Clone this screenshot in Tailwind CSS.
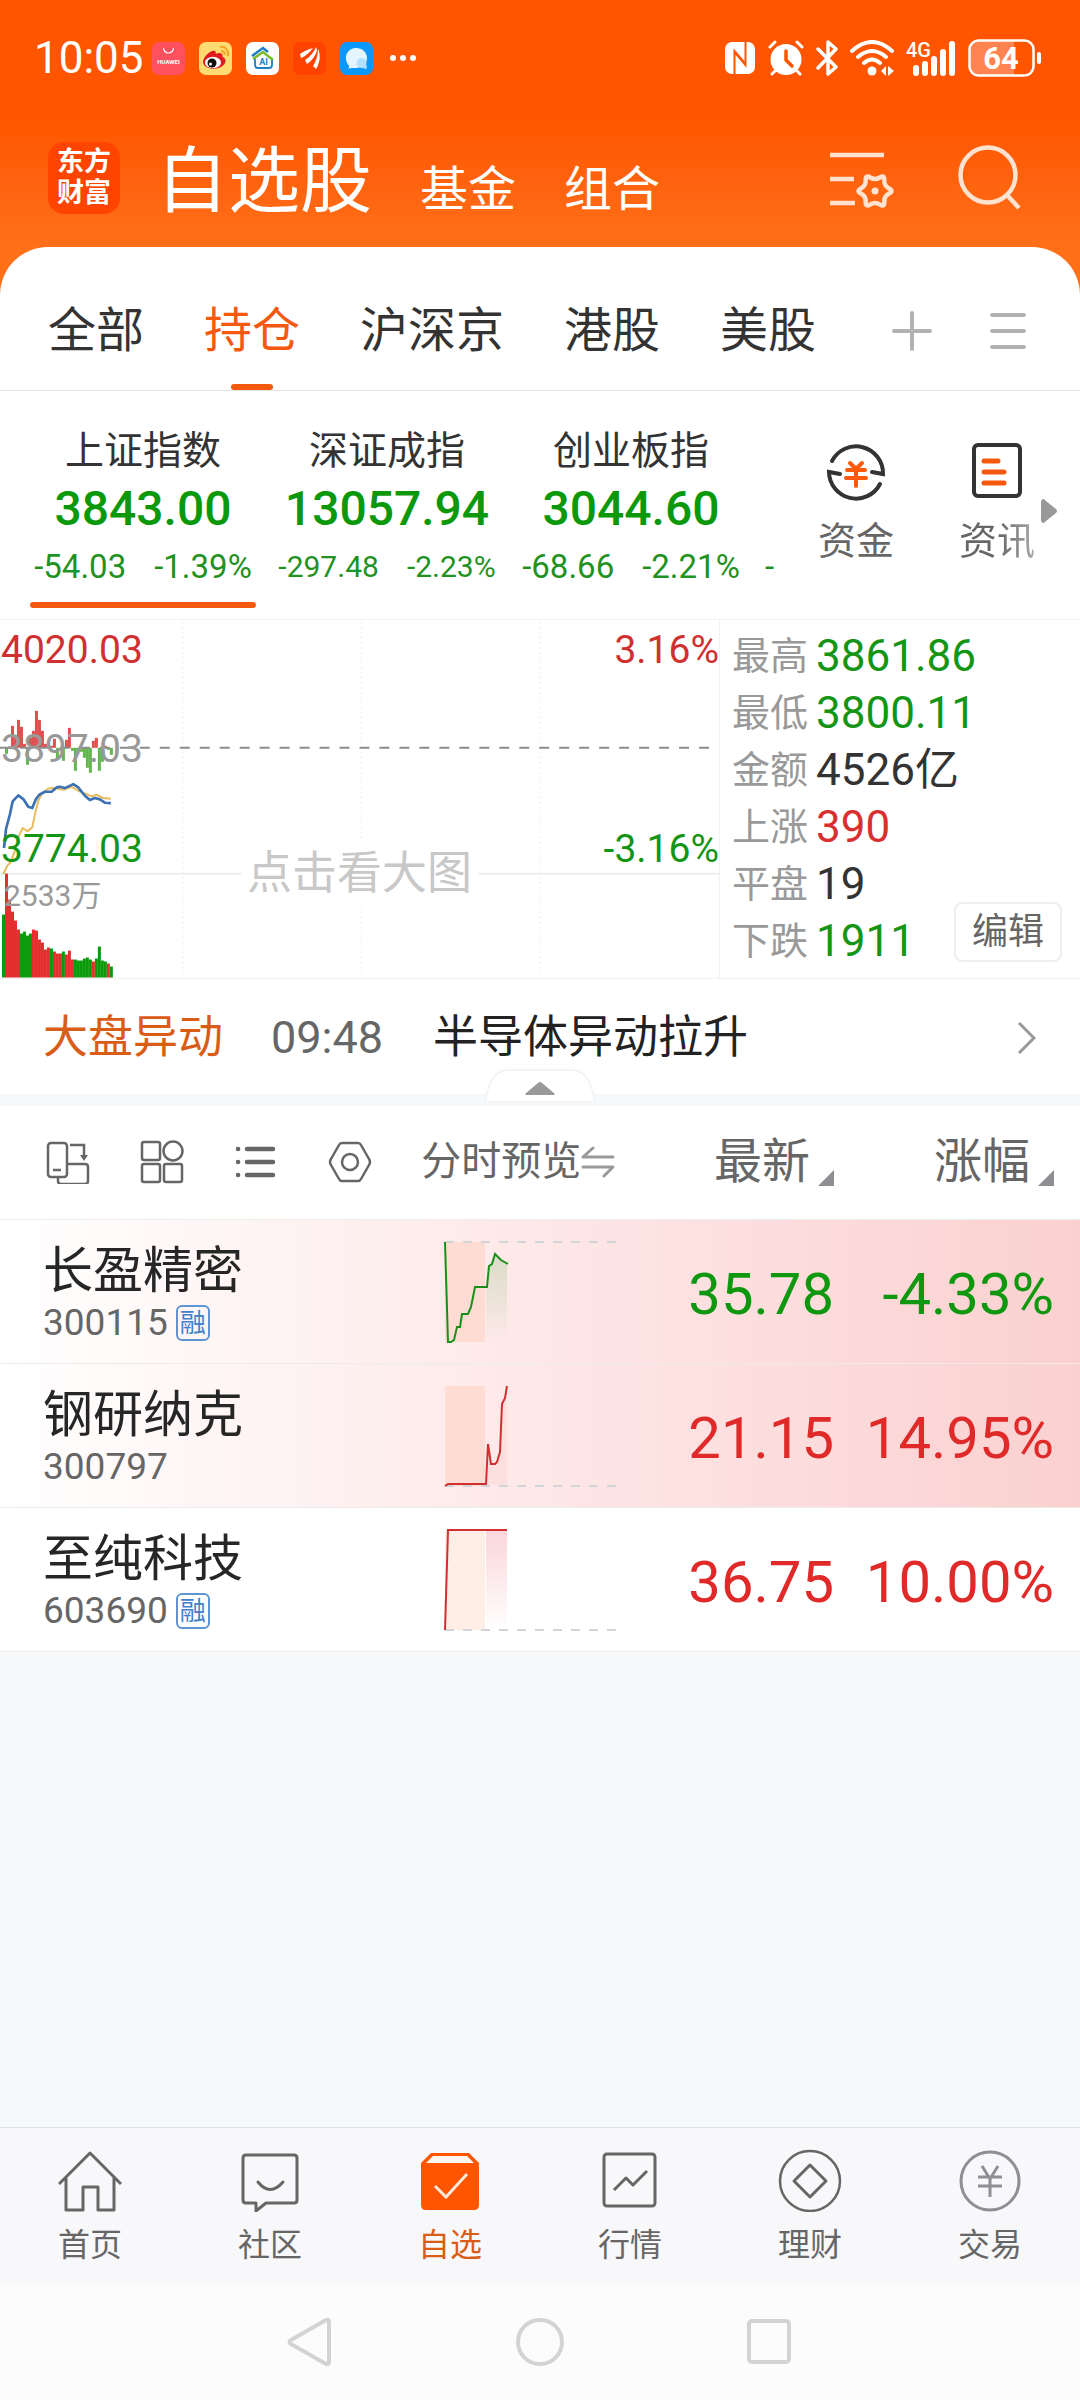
<!DOCTYPE html>
<html lang="zh-CN">
<head>
  <meta charset="UTF-8" />
  <meta name="viewport" content="width=device-width, initial-scale=1.0" />
  <title>自选股</title>
  <script src="https://cdn.jsdelivr.net/npm/@tailwindcss/browser@4"></script>
</head>
<body class="font-['Roboto','Noto_Sans_CJK_SC',sans-serif] bg-[#f7f8fa] text-[#333] min-h-screen flex flex-col">

  <!-- Cabeçalho laranja -->
  <header class="bg-linear-to-b from-[#ff5500] from-40% to-[#ff7019] to-85% -mb-12 pb-12 text-white">
    <div class="flex items-center justify-between pl-[34px] pr-[38px] pt-9 h-20">
      <div class="flex items-center">
        <span class="text-[44px] leading-[44px] mr-2">10:05</span>
        <div class="flex items-center gap-[14px]">
          <svg class="w-[33px] h-[33px]" viewBox="0 0 33 33"><rect width="33" height="33" rx="7" fill="#ff5060"/><path d="M11.500 6a5 5 0 0 0 10 0" fill="none" stroke="#fff" stroke-width="1.200"/><text x="16.500" y="21.500" font-size="6" font-weight="700" fill="#fff" text-anchor="middle">HUAWEI</text></svg>
          <svg class="w-[33px] h-[33px]" viewBox="0 0 33 33"><rect width="33" height="33" rx="7" fill="#ffdc72"/><path d="M4 20c0-5 8-13 12-11 1 1 1 2 .5 3 4-2 8-1 7 3 4 1 4 6 0 9-6 5-19 3-19.500-4z" fill="#e01a1f"/><ellipse cx="14" cy="20.500" rx="8" ry="5.800" fill="#fff"/><circle cx="13" cy="21" r="4.500" fill="#111"/><circle cx="11.500" cy="22" r="1.500" fill="#fff"/><path d="M21 5c5-1 9 3 8 9M22 9c3-.5 4 2 3.500 4" fill="none" stroke="#f5a623" stroke-width="2"/></svg>
          <svg class="w-[33px] h-[33px]" viewBox="0 0 33 33"><rect width="33" height="33" rx="7" fill="#fff"/><path d="M6 14 17 6l5 4" fill="none" stroke="#1b7fc0" stroke-width="2.500"/><path d="m7 17 10-7 10 8" fill="none" stroke="#7ab92c" stroke-width="2.500"/><path d="M9 17v6q0 3 3 3h11q3 0 3-3v-5" fill="none" stroke="#1b7fc0" stroke-width="1.800"/><text x="17.500" y="23" font-size="9" font-weight="700" fill="#1b7fc0" text-anchor="middle">AI</text></svg>
          <svg class="w-[33px] h-[33px]" viewBox="0 0 33 33"><rect width="33" height="33" rx="7" fill="#ff4200"/><path d="M7 12c4-3 9-5 13-6-3 4-7 8-12 10zM12 18c5-3 9-8 11-13l1 3c-1 5-5 11-10 14zM20 24c3-5 5-10 5-17 3 6 2 14-2 20z" fill="#fff"/></svg>
          <svg class="w-[33px] h-[33px]" viewBox="0 0 33 33"><rect width="33" height="33" rx="7" fill="#0a98fb"/><path d="M16 6c6 0 11 4 11 10s-5 10-11 10c-2 0-4 0-8 .500 2-2 1-3 0-4-5-8 0-16.500 8-16.500z" fill="#e4f5ff"/><circle cx="21.500" cy="21" r="5" fill="#b4e0ff"/><path d="m22 26 5-3-.5 4z" fill="#b4e0ff"/></svg>
        </div>
        <svg class="w-7 h-2 ml-4" viewBox="0 0 28 8" fill="#fff"><circle cx="4" cy="4" r="3"/><circle cx="14" cy="4" r="3"/><circle cx="24" cy="4" r="3"/></svg>
      </div>
      <div class="flex items-center gap-3">
        <svg class="w-8 h-[34px]" viewBox="0 0 32 34"><rect x="1" y="1" width="30" height="32" rx="7" fill="#fff"/><path d="M10.500 34V10l11 13M21.500 0v24l-11-13" stroke="#ff5500" stroke-width="2" fill="none"/></svg>
        <svg class="w-9 h-9" viewBox="0 0 36 36" stroke-linecap="round"><circle cx="18" cy="19.500" r="15.500" fill="#fff"/><path d="m2 7 5-5M34 7l-5-5M8 30l-4 4M28 30l4 4" stroke="#fff" stroke-width="3"/><path d="M18 11v9l6 6" stroke="#ff5500" stroke-width="3.500" fill="none"/></svg>
        <svg class="w-[22px] h-9" viewBox="0 0 22 36" fill="none" stroke="#fff" stroke-width="3.500" stroke-linejoin="round" stroke-linecap="round"><path d="m2 9 18 18-8 7V2l8 7L2 28"/></svg>
        <svg class="w-11 h-9" viewBox="0 0 44 36" fill="none" stroke="#fff" stroke-width="4" stroke-linecap="round"><path d="M2 11q20-18 40 0M8 17q14-12 28 0M14 23q8-7 16 0"/><circle cx="22" cy="31" r="4.500" fill="#fff" stroke="none"/><path d="m31 31 5-5v10zM38 26v10l6-5z" fill="#fff" stroke="none"/></svg>
        <svg class="w-[50px] h-9 overflow-visible" viewBox="0 0 50 36" fill="#fff"><text x="0" y="17" font-size="20" font-weight="500">4G</text><rect x="7" y="25" width="6" height="11" rx="3"/><rect x="16" y="21" width="6" height="15" rx="3"/><rect x="25" y="16" width="6" height="20" rx="3"/><rect x="34" y="9" width="6" height="27" rx="3"/><rect x="43" y="1" width="6" height="35" rx="3"/></svg>
        <svg class="w-[74px] h-[38px]" viewBox="0 0 74 38"><path d="M10 2h36v34H10q-8 0-8-8V10q0-8 8-8z" fill="#ff8450"/><rect x="1.500" y="1.500" width="64" height="35" rx="9" fill="none" stroke="#fff" stroke-width="2.500"/><rect x="69" y="13" width="4" height="12" rx="2" fill="#fff"/><text x="33" y="30" font-size="31" font-weight="700" fill="#fff" text-anchor="middle">64</text></svg>
      </div>
    </div>
    <div class="flex items-center pl-12 pr-[58px] pt-[34px] pb-[15px]">
      <div class="bg-[#ff4400] rounded-2xl w-[72px] h-[72px] flex items-center justify-center text-center text-[27px] leading-[31px] font-bold mr-9 mt-2.5">东方<br />财富</div>
      <nav class="flex items-baseline gap-12 pt-[18px]">
        <a href="#" class="text-[72px] leading-[100px]">自选股</a>
        <a href="#" class="text-5xl">基金</a>
        <a href="#" class="text-5xl">组合</a>
      </nav>
      <div class="flex items-center ml-auto gap-16 mt-2.5">
        <button aria-label="设置列表">
          <svg class="w-16 h-[62px]" viewBox="0 0 64 62" fill="none" stroke="#ffe2cf" stroke-width="4.500"><path d="M0 8h54M0 32h24M0 56h25"/><path d="M59 46.600Q64 44 59 41.400 54 38.700 54.300 33.100 54.500 27.500 49.800 30.500 45 33.500 40.200 30.500 35.500 27.500 35.700 33.100 36 38.700 31 41.400 26 44 31 46.600 36 49.300 35.700 54.900 35.500 60.500 40.200 57.500 45 54.500 49.800 57.500 54.500 60.500 54.300 54.900 54 49.300 59 46.600z"/><circle cx="45" cy="44" r="3.500" fill="#ffe2cf" stroke="none"/></svg>
        </button>
        <button aria-label="搜索">
          <svg class="w-16 h-[66px]" viewBox="0 0 64 66" fill="none" stroke="#ffe2cf" stroke-width="4.500"><circle cx="30" cy="30" r="27.500"/><path d="m48 49 13 14"/></svg>
        </button>
      </div>
    </div>
  </header>

  <main class="flex-1">
    <section class="bg-white rounded-t-[48px]">
      <!-- Abas -->
      <nav class="flex items-stretch gap-[60px] pl-12 pr-[52px] pt-9 h-36 border-b border-[#e3e3e3] text-5xl leading-24">
        <a href="#">全部</a>
        <a href="#" class="relative text-[#f5590f]">持仓<span class="absolute left-1/2 -translate-x-1/2 bottom-0 w-[42px] h-[6px] rounded-full bg-[#f5590f]"></span></a>
        <a href="#">沪深京</a>
        <a href="#">港股</a>
        <a href="#">美股</a>
        <div class="flex items-center gap-[56px] ml-auto pb-3">
          <button aria-label="添加"><svg class="w-10 h-10" viewBox="0 0 40 40" stroke="#b2b2b2" stroke-width="4" stroke-linecap="round"><path d="M2 20h36M20 2v36"/></svg></button>
          <button aria-label="菜单"><svg class="w-10 h-10" viewBox="0 0 40 40" stroke="#b2b2b2" stroke-width="4" stroke-linecap="round"><path d="M4 4h32M4 20h32M4 36h32"/></svg></button>
        </div>
      </nav>

      <!-- Índices -->
      <div class="flex h-[229px] border-b border-[#f3f3f3]">
        <div class="flex flex-1 min-w-0 overflow-hidden pl-[21px] whitespace-nowrap">
          <button class="relative flex flex-col items-center w-[244px] shrink-0 pt-8">
            <span class="text-[39px] leading-[56px]">上证指数</span>
            <span class="text-5xl leading-[60px] font-medium text-[#0b980b]">3843.00</span>
            <span class="flex gap-7 text-[33px] leading-[56px] text-[#1f921f]"><span>-54.03</span><span>-1.39%</span></span>
            <span class="absolute left-[9px] right-[9px] bottom-[11px] h-[6px] rounded-full bg-[#f5590f]"></span>
          </button>
          <button class="flex flex-col items-center w-[244px] shrink-0 pt-8">
            <span class="text-[39px] leading-[56px]">深证成指</span>
            <span class="text-5xl leading-[60px] font-medium text-[#0b980b]">13057.94</span>
            <span class="flex gap-7 text-[30px] leading-[56px] text-[#1f921f]"><span>-297.48</span><span>-2.23%</span></span>
          </button>
          <button class="flex flex-col items-center w-[244px] shrink-0 pt-8">
            <span class="text-[39px] leading-[56px]">创业板指</span>
            <span class="text-5xl leading-[60px] font-medium text-[#0b980b]">3044.60</span>
            <span class="flex gap-7 text-[33px] leading-[56px] text-[#1f921f]"><span>-68.66</span><span>-2.21%</span></span>
          </button>
          <span class="pt-[148px] pl-3 text-[33px] leading-[56px] text-[#1f921f]">-</span>
        </div>
        <div class="flex w-[305px] shrink-0 items-start pt-12 text-[38px] leading-[52px] text-[#666]">
          <button class="w-[162px] flex flex-col items-center gap-3">
            <svg class="w-16 h-16" viewBox="0 0 64 64" fill="none" stroke="#333" stroke-width="4" stroke-linecap="round"><path d="M8 22a27 27 0 0 1 51 13l-11-2"/><path d="M56 45A27 27 0 0 1 5 33l11 2"/><path d="m26 24 6 6 6-6M23 31h18M22 39h20M32 30v17" stroke="#ff5a0c"/></svg>
            资金
          </button>
          <button class="w-[120px] flex flex-col items-center gap-3">
            <svg class="w-16 h-16" viewBox="0 0 64 64" fill="none" stroke="#333" stroke-width="4" stroke-linecap="round"><rect x="9" y="6" width="46" height="51" rx="4"/><path d="M19 22h14M19 33h20M19 44h20" stroke="#f5590f" stroke-width="5"/></svg>
            <span class="bg-linear-to-r from-[#666] from-50% to-[#aaa] bg-clip-text text-transparent">资讯</span>
          </button>
          <svg class="w-4 h-6 mt-[60px] -ml-4" viewBox="0 0 16 24" fill="#999"><path d="M0 2q2-4 5 0l10 8q2 2 0 4L5 22q-3 4-5 0z"/></svg>
        </div>
      </div>

      <!-- Gráfico do dia -->
      <div class="flex border-b border-[#f1f1f1]">
        <div class="relative w-2/3 border-r border-[#f1f1f1] text-[39px] leading-[44px]">
          <svg class="block w-full h-auto" viewBox="0 0 720 358">
            <path d="M183 2v354M362 2v354M541 2v354" stroke="#ececec" stroke-dasharray="2 3"/>
            <path d="M0 254h720" stroke="#eee" stroke-width="2"/>
            <g id="momentumBars"></g>
            <path d="M0 128h720" stroke="#8c8c8c" stroke-width="2" stroke-dasharray="10 10"/>
            <g id="volumeBars"></g>
            <g transform="translate(0 -9) scale(.3333)" fill="none" stroke-linejoin="round">
              <path d="M10 790 22 765 32 755 45 720 55 680 68 652 82 662 97 650 105 610 115 570 125 550 145 533 165 532 190 537 215 528 235 540 260 550 275 557 290 552 310 562 333 564" stroke="#e8bc5c" stroke-width="6"/>
              <path d="M12 712 18 655 30 610 38 572 55 554 70 565 85 588 97 592 108 565 118 552 135 543 155 543 170 530 180 528 195 532 220 520 235 530 255 555 270 568 285 562 300 566 315 576 333 577" stroke="#3c72b4" stroke-width="8"/>
            </g>
          </svg>
          <span class="absolute left-px top-2 text-[#d03030]">4020.03</span>
          <span class="absolute left-px top-[107px] text-[#999]">3897.03</span>
          <span class="absolute left-px top-[207px] text-[#159515]">3774.03</span>
          <span class="absolute left-1 top-[254px] text-[30px] text-[#999]">2533万</span>
          <span class="absolute right-0 top-2 text-[#d03030]">3.16%</span>
          <span class="absolute right-0 top-[207px] text-[#159515]">-3.16%</span>
          <button class="absolute left-1/2 -translate-x-1/2 top-[222px] bg-white px-1.5 text-[45px] leading-[64px] text-[#c8c8c8] whitespace-nowrap">点击看大图</button>
        </div>
        <div class="relative flex-1 pl-3 pt-2">
          <dl class="grid grid-cols-[auto_1fr] gap-x-2 items-center text-[44px] leading-[57px]">
            <dt class="text-[38px] text-[#999]">最高</dt><dd class="text-[#159515]">3861.86</dd>
            <dt class="text-[38px] text-[#999]">最低</dt><dd class="text-[#159515]">3800.11</dd>
            <dt class="text-[38px] text-[#999]">金额</dt><dd>4526亿</dd>
            <dt class="text-[38px] text-[#999]">上涨</dt><dd class="text-[#d83030]">390</dd>
            <dt class="text-[38px] text-[#999]">平盘</dt><dd>19</dd>
            <dt class="text-[38px] text-[#999]">下跌</dt><dd class="text-[#159515]">1911</dd>
          </dl>
          <button class="absolute right-[18px] bottom-4 w-[108px] h-[60px] border-2 border-[#eee] rounded-lg bg-white text-4xl text-[#666]">编辑</button>
        </div>
      </div>

      <!-- Movimento do mercado -->
      <div class="relative">
        <a href="#" class="flex items-center h-[115px] pt-1 pl-[43px] pr-11 text-[45px]">
          <span class="text-[#d95d16]">大盘异动</span>
          <span class="ml-12 text-[#666]">09:48</span>
          <span class="ml-[50px] text-[#222]">半导体异动拉升</span>
          <svg class="w-[18px] h-8 ml-auto" viewBox="0 0 18 32" fill="none" stroke="#999" stroke-width="3"><path d="m1 1 15 15L1 31"/></svg>
        </a>
        <div class="h-3 bg-[#f7f8fa]"></div>
        <button aria-label="收起" class="absolute left-1/2 -translate-x-1/2 bottom-0.5">
          <svg class="w-28 h-9" viewBox="0 0 112 36"><path d="M1 34Q6 2 24 2h64q18 0 23 32z" fill="#fff" stroke="#f3f4f6" stroke-width="2"/><path d="M42 25q-2 2 1 2h26q3 0 1-2L58 15q-2-2-4 0z" fill="#999"/></svg>
        </button>
      </div>
    </section>

    <!-- Tabela de ações -->
    <table class="w-full table-fixed bg-white border-collapse">
      <colgroup><col class="w-[39%]" /><col class="w-[19%]" /><col /><col class="w-[246px]" /></colgroup>
      <thead>
        <tr class="h-[114px] border-b border-[#eee] text-[#666] text-5xl">
          <th>
            <div class="flex items-center gap-[50px] pl-[46px]">
              <button aria-label="切换布局"><svg class="w-11 h-11" viewBox="0 0 44 44" fill="none" stroke="#666" stroke-width="2.500"><rect x="2" y="3" width="19" height="34" rx="3"/><path d="M7 30h8M12 37v4q0 3 3 3h24q3 0 3-3V27q0-3-3-3H21M24 5h14v12"/><path d="M34 15h8l-4 6z" fill="#666" stroke="none"/></svg></button>
              <button aria-label="宫格"><svg class="w-11 h-11" viewBox="0 0 44 44" fill="none" stroke="#666" stroke-width="2.500"><rect x="2" y="2" width="18" height="18" rx="2"/><circle cx="33" cy="11" r="9.500"/><rect x="2" y="24" width="18" height="18" rx="2"/><rect x="24" y="24" width="18" height="18" rx="2"/></svg></button>
              <button aria-label="列表"><svg class="w-11 h-11" viewBox="0 0 44 44" stroke="#666" stroke-width="4.500" stroke-linecap="round"><path d="M4 9h.1M13 9h26M4 22h.1M13 22h26M4 35h.1M13 35h26"/></svg></button>
              <button aria-label="设置"><svg class="w-11 h-11" viewBox="0 0 44 44" fill="none" stroke="#666" stroke-width="2.500" stroke-linejoin="round"><path d="M14 3h16q2 0 3 2l8 14q2 3 0 6l-8 14q-1 2-3 2H14q-2 0-3-2L3 25q-2-3 0-6l8-14q1-2 3-2z"/><circle cx="22" cy="22" r="8"/></svg></button>
            </div>
          </th>
          <th class="font-normal">
            <button class="flex items-center text-[40px] whitespace-nowrap">分时预览<svg class="w-[34px] h-8 shrink-0" viewBox="0 0 34 32" fill="none" stroke="#999" stroke-width="3" stroke-linecap="round" stroke-linejoin="round"><path d="M12 2 2 11h30M2 21h30l-9 9"/></svg></button>
          </th>
          <th class="font-normal"><button class="flex items-end gap-2 ml-auto whitespace-nowrap">最新<svg class="w-4 h-4" viewBox="0 0 16 16" fill="#8e8e93"><path d="M16 0v16H0z"/></svg></button></th>
          <th class="font-normal pr-[26px]"><button class="flex items-end gap-2 ml-auto whitespace-nowrap">涨幅<svg class="w-4 h-4" viewBox="0 0 16 16" fill="#8e8e93"><path d="M16 0v16H0z"/></svg></button></th>
        </tr>
      </thead>
      <tbody class="text-[58px] text-right">
        <tr class="h-36 border-b border-[#ececec] bg-linear-to-r from-white to-[#fbd0d0]">
          <td class="pl-[43px] pt-1.5 text-left">
            <div class="text-[50px] leading-[56px] text-[#262626]">长盈精密</div>
            <div class="flex items-center gap-2 text-[37px] leading-[48px] text-[#666]">300115 <span class="border-2 border-[#5d95d2] rounded-md text-[#4080cc] text-[26px] leading-[32px] px-[2px]">融</span></div>
          </td>
          <td class="pl-[22px]">
            <svg class="w-[176px] h-[104px]" viewBox="0 0 176 104" fill="none">
              <defs><linearGradient id="greenFade" x2="0" y2="1"><stop stop-color="#159515" stop-opacity=".16"/><stop offset="1" stop-color="#159515" stop-opacity="0"/></linearGradient></defs>
              <path d="M2 2h40v100H2z" fill="#ff7030" fill-opacity=".12"/>
              <path d="M43 46 45 26l3-2 4-10 4 5 8 5v78H43z" fill="url(#greenFade)"/>
              <path d="M2 2h172" stroke="#d2d5d8" stroke-width="2" stroke-dasharray="9 9"/>
              <path d="M2 2 5 102h3l3-2 3-13h3l2-13h6l3-7 4-20h12l2-21 3-2 3-10 6 6 7 4" stroke="#189018" stroke-width="2"/>
            </svg>
          </td>
          <td class="pt-1.5 text-[#0f980f]">35.78</td>
          <td class="pt-1.5 pr-[26px] text-[#0f980f]">-4.33%</td>
        </tr>
        <tr class="h-36 border-b border-[#ececec] bg-linear-to-r from-white to-[#fbd0d0]">
          <td class="pl-[43px] pt-1.5 text-left">
            <div class="text-[50px] leading-[56px] text-[#262626]">钢研纳克</div>
            <div class="text-[37px] leading-[48px] text-[#666]">300797</div>
          </td>
          <td class="pl-[22px]">
            <svg class="w-[176px] h-[104px]" viewBox="0 0 176 104" fill="none">
              <path d="M2 2h40v100H2z" fill="#ff7030" fill-opacity=".12"/>
              <path d="M43 100 45 60l3 20h5l4-12 3-48 4-18v100z" fill="#e03030" fill-opacity=".05"/>
              <path d="M2 102h172" stroke="#d2d5d8" stroke-width="2" stroke-dasharray="9 9"/>
              <path d="m2 102 3-2h38l2-40 3 20h4l2-2 3-10 2-48 3-6 2-12" stroke="#d03030" stroke-width="2"/>
            </svg>
          </td>
          <td class="pt-1.5 text-[#e02a2a]">21.15</td>
          <td class="pt-1.5 pr-[26px] text-[#e02a2a]">14.95%</td>
        </tr>
        <tr class="h-36 border-b border-[#ececec]">
          <td class="pl-[43px] pt-1.5 text-left">
            <div class="text-[50px] leading-[56px] text-[#262626]">至纯科技</div>
            <div class="flex items-center gap-2 text-[37px] leading-[48px] text-[#666]">603690 <span class="border-2 border-[#5d95d2] rounded-md text-[#4080cc] text-[26px] leading-[32px] px-[2px]">融</span></div>
          </td>
          <td class="pl-[22px]">
            <svg class="w-[176px] h-[104px]" viewBox="0 0 176 104" fill="none">
              <defs><linearGradient id="redFade" x2="0" y2="1"><stop stop-color="#e83040" stop-opacity=".2"/><stop offset="1" stop-color="#e83040" stop-opacity="0"/></linearGradient></defs>
              <path d="M2 2h40v100H2z" fill="#ff7030" fill-opacity=".12"/>
              <path d="M43 2h21v100H43z" fill="url(#redFade)"/>
              <path d="M2 102h172" stroke="#d2d5d8" stroke-width="2" stroke-dasharray="9 9"/>
              <path d="M2 102 5 2h59" stroke="#d03030" stroke-width="2"/>
            </svg>
          </td>
          <td class="pt-1.5 text-[#e02a2a]">36.75</td>
          <td class="pt-1.5 pr-[26px] text-[#e02a2a]">10.00%</td>
        </tr>
      </tbody>
    </table>
  </main>

  <!-- Navegação inferior -->
  <nav class="grid grid-cols-6 h-[157px] pt-5 border-t border-[#e0e0e0] bg-[#f8f8fa] text-[32px] leading-[50px] text-[#666]">
    <a href="#" class="flex flex-col items-center gap-2">
      <svg class="w-16 h-16" viewBox="0 0 64 64" fill="none" stroke="#666" stroke-width="3" stroke-linejoin="round"><path d="M1 36 32 5l31 31M8 30v32h17V39h15v23h16V30"/></svg>
      首页
    </a>
    <a href="#" class="flex flex-col items-center gap-2">
      <svg class="w-16 h-16" viewBox="0 0 64 64" fill="none" stroke="#666" stroke-width="3" stroke-linejoin="round"><path d="M8 7h48q3 0 3 3v42q0 3-3 3H28l-10 8v-8H8q-3 0-3-3V10q0-3 3-3z"/><path d="M20 34q12 15 25 0" stroke-linecap="round"/></svg>
      社区
    </a>
    <a href="#" class="flex flex-col items-center gap-2 text-[#d95d16]">
      <svg class="w-16 h-16" viewBox="0 0 64 64" fill="none"><path d="M3 15 13 5h38l10 10v42q0 5-5 5H8q-5 0-5-5z" fill="#ff5500"/><path d="m8 15 7-7h34l7 7z" fill="#fdf6f1"/><path d="m17 38 11 11 21-23" stroke="#ffe8d8" stroke-width="3"/></svg>
      自选
    </a>
    <a href="#" class="flex flex-col items-center gap-2">
      <svg class="w-16 h-16" viewBox="0 0 64 64" fill="none" stroke="#666" stroke-width="3" stroke-linejoin="round"><rect x="6" y="6" width="51" height="52" rx="3"/><path d="m16 42 12-12 7 7 14-14"/></svg>
      行情
    </a>
    <a href="#" class="flex flex-col items-center gap-2">
      <svg class="w-16 h-16" viewBox="0 0 64 64" fill="none" stroke="#666" stroke-width="2.500" stroke-linejoin="round"><circle cx="32" cy="33" r="30"/><path d="m32 17 16 16-16 16-16-16z" stroke-width="3"/></svg>
      理财
    </a>
    <a href="#" class="flex flex-col items-center gap-2">
      <svg class="w-16 h-16" viewBox="0 0 64 64" fill="none" stroke="#8e8e93" stroke-width="3"><circle cx="32" cy="33" r="29"/><path d="m24 18 8 13 8-13M20 29h24M20 38h24M32 31v18"/></svg>
      交易
    </a>
  </nav>
  <div class="flex items-center justify-center gap-[182px] h-[116px] bg-[#fcfcfc]">
    <button aria-label="返回"><svg class="w-12 h-12" viewBox="0 0 48 48" fill="none" stroke="#d3d3d3" stroke-width="4" stroke-linejoin="round"><path d="M5 22 40 2q3-1 3 2v40q0 3-3 2L5 26q-3-2 0-4z"/></svg></button>
    <button aria-label="主屏幕"><svg class="w-12 h-12" viewBox="0 0 48 48" fill="none" stroke="#d3d3d3" stroke-width="4"><circle cx="24" cy="24" r="22"/></svg></button>
    <button aria-label="最近任务"><svg class="w-12 h-12" viewBox="0 0 48 48" fill="none" stroke="#d3d3d3" stroke-width="4"><rect x="3" y="3" width="40" height="41" rx="3"/></svg></button>
  </div>

  <script>
    const volumes = [63, 104, 78, 66, 57, 48, 44, 46, 42, 44, 48, 47, 38, 35, 28, 30, 29, 26, 24, 24, 26, 23, 27, 18, 18, 17, 17, 19, 20, 18, 16, 19, 31, 17, 16, 14, 11];
    const fallingBars = [0, 6, 7, 8, 9, 16, 20, 24, 25, 26, 27, 28, 29, 31, 32, 33, 34, 36];
    const momentum = [0, -6, 0, 22, 10, 28, 21, 4, -17, 10, 17, 37, 28, 17, 4, 3, 2, 9, -12, 0, -13, 8, 20, -3, -23, -3, -4, -10, -20, -25, 7, 10, -23, -14, 2, -2, -7];

    function drawBar(groupId, index, top, height, color) {
      const bar = document.createElementNS('http://www.w3.org/2000/svg', 'rect');
      bar.setAttribute('x', 2 + index * 3);
      bar.setAttribute('y', top);
      bar.setAttribute('width', 3);
      bar.setAttribute('height', height);
      bar.setAttribute('fill', color);
      document.getElementById(groupId).appendChild(bar);
    }

    volumes.forEach((value, i) => {
      drawBar('volumeBars', i, 358 - value, value, fallingBars.includes(i) ? '#0a9a0a' : '#e52e2e');
    });

    momentum.forEach((value, i) => {
      drawBar('momentumBars', i, value > 0 ? 128 - value : 128, Math.abs(value), value > 0 ? '#e05050' : '#62b84e');
    });
  </script>
</body>
</html>
